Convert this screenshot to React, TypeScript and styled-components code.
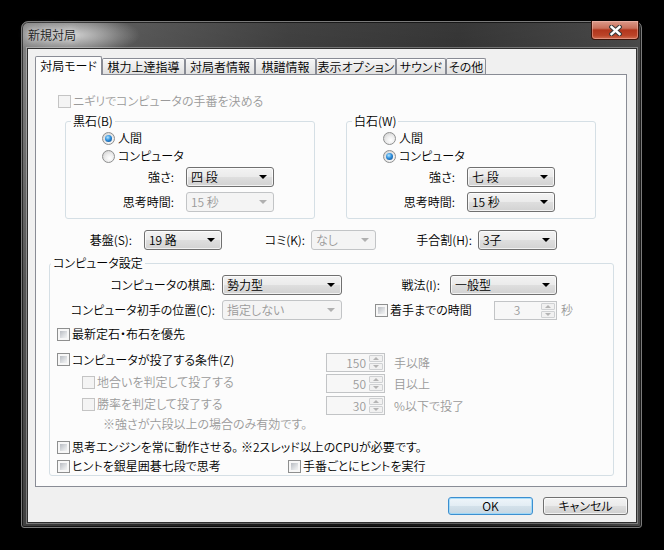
import React from "react";
import styled, { createGlobalStyle } from "styled-components";

const GlobalStyle = createGlobalStyle`
  html, body {
    margin: 0;
    padding: 0;
    background: #000;
  }
  body {
    font-family: "Noto Sans CJK JP", "Noto Sans", sans-serif;
    font-size: 12px;
    font-weight: 350;
    line-height: 14px;
    font-feature-settings: "palt";
    color: #000;
  }
`;

const PANEL_BG = "#fcfcfc";
const GRAY_TEXT = "#9a9a9a";

const Screen = styled.div`
  width: 664px;
  height: 550px;
  box-sizing: border-box;
  padding: 21px 0 0 21px;
  background: #000;
`;

const Window = styled.div`
  width: 621px;
  height: 507px;
  box-sizing: border-box;
  display: flex;
  flex-direction: column;
  padding: 0 4px 4px 5px;
  border: 1px solid #7b7b7b;
  border-radius: 7px 7px 3px 3px;
  background:
    radial-gradient(ellipse 66px 20px at 52px 13px, rgba(215, 215, 215, 0.9), rgba(215, 215, 215, 0) 100%),
    linear-gradient(180deg, rgba(255, 255, 255, 0.16) 0, rgba(255, 255, 255, 0) 260px),
    linear-gradient(100deg, #6e6e6e 0%, #3c3c3c 14%, #1e1e1e 38%, #121212 62%, #262626 86%, #4a4a4a 100%);
  box-shadow: inset 0 0 0 1px rgba(0, 0, 0, 0.6);
`;

const TitleBar = styled.div`
  height: 26px;
  display: flex;
  align-items: center;
  padding-left: 1px;
`;

const Title = styled.span`
  color: #1e1e1e;
  text-shadow: 0 0 6px #e6e6e6, 0 0 10px #d0d0d0;
`;

const CloseButton = styled.div`
  margin-left: auto;
  margin-right: -2px;
  align-self: flex-start;
  margin-top: -1px;
  width: 48px;
  height: 19px;
  box-sizing: border-box;
  border: 1px solid #3b1309;
  border-top: none;
  border-radius: 0 0 4px 4px;
  background: linear-gradient(180deg, #dc9a8a 0%, #c9705b 40%, #b2361d 50%, #bb4428 80%, #cf6c50 100%);
  box-shadow: inset 0 0 0 1px rgba(255, 210, 200, 0.4);
  display: flex;
  align-items: center;
  justify-content: center;
`;

const Client = styled.div`
  flex: 1;
  display: flex;
  flex-direction: column;
  background: #f0f0f0;
  border: 1px solid #2f2f2f;
  box-shadow: 0 0 0 1px rgba(255, 255, 255, 0.3);
  padding: 7px 0 0 7px;
`;

const TabStrip = styled.div`
  display: flex;
  align-items: flex-end;
  height: 18px;
`;

const Tab = styled.div<{ $w: number; $active?: boolean }>`
  width: ${(p) => p.$w}px;
  height: ${(p) => (p.$active ? 19 : 16)}px;
  margin-bottom: ${(p) => (p.$active ? -1 : 0)}px;
  box-sizing: border-box;
  border: 1px solid #898c95;
  border-bottom: none;
  border-radius: 2px 2px 0 0;
  background: ${(p) =>
    p.$active ? PANEL_BG : "linear-gradient(180deg, #f6f6f6 0%, #ececec 50%, #e0e0e0 100%)"};
  box-shadow: ${(p) => (p.$active ? "none" : "inset 0 1px 0 #fff")};
  position: relative;
  z-index: ${(p) => (p.$active ? 1 : 0)};
  display: flex;
  align-items: center;
  justify-content: center;
  white-space: nowrap;
  padding-top: ${(p) => (p.$active ? 0 : 1)}px;
`;

const Panel = styled.div`
  width: 592px;
  height: 413px;
  box-sizing: border-box;
  border: 1px solid #898c95;
  background: ${PANEL_BG};
  display: flex;
  flex-direction: column;
`;

const CheckRow = styled.div<{ $left?: number; $top?: number; $w?: number; $h?: number; $off?: boolean }>`
  display: flex;
  align-items: center;
  gap: 2px;
  height: ${(p) => p.$h ?? 14}px;
  margin-left: ${(p) => p.$left ?? 0}px;
  margin-top: ${(p) => p.$top ?? 0}px;
  width: ${(p) => (p.$w ? `${p.$w}px` : "auto")};
  flex-shrink: 0;
  color: ${(p) => (p.$off ? GRAY_TEXT : "#000")};
  white-space: nowrap;
`;

const Box = styled.span<{ $off?: boolean }>`
  width: 13px;
  height: 13px;
  box-sizing: border-box;
  flex-shrink: 0;
  border: 1px solid ${(p) => (p.$off ? "#c4c4c4" : "#8e8f8f")};
  padding: 2px;
  background: ${(p) =>
    p.$off
      ? "#f4f4f4"
      : "linear-gradient(135deg, #b8bcc2 0%, #e4e6e8 70%, #f3f3f3 100%) content-box, #f7f7f7"};
`;

const Group = styled.div<{ $w: number; $h: number; $left?: number; $top?: number }>`
  position: relative;
  width: ${(p) => p.$w}px;
  height: ${(p) => p.$h}px;
  box-sizing: border-box;
  margin-left: ${(p) => p.$left ?? 0}px;
  margin-top: ${(p) => p.$top ?? 0}px;
  border: 1px solid #d5dfe5;
  border-radius: 3px;
  display: flex;
  flex-direction: column;
  flex-shrink: 0;
`;

const Legend = styled.span<{ $left?: number }>`
  position: absolute;
  top: -8px;
  left: ${(p) => p.$left ?? 5}px;
  padding: 0 2px;
  background: ${PANEL_BG};
  white-space: nowrap;
`;

const PlayerRow = styled.div`
  display: flex;
  gap: 31px;
  margin-left: 29px;
  margin-top: 13px;
`;

const RadioRow = styled.div<{ $top?: number }>`
  display: flex;
  align-items: center;
  gap: 3px;
  height: 18px;
  padding-left: 36px;
  margin-top: ${(p) => p.$top ?? 0}px;
`;

const Radio = styled.span<{ $on?: boolean }>`
  width: 13px;
  height: 13px;
  box-sizing: border-box;
  border-radius: 50%;
  border: 1px solid #8e8f8f;
  background: radial-gradient(circle at 60% 65%, #ffffff 0%, #ececec 45%, #c9c9c9 100%);
  display: flex;
  align-items: center;
  justify-content: center;
  &::after {
    content: "";
    display: ${(p) => (p.$on ? "block" : "none")};
    width: 7px;
    height: 7px;
    border-radius: 50%;
    background: radial-gradient(circle at 40% 35%, #b5e6ff 0%, #2e8fdc 45%, #0d3f7c 100%);
  }
`;

const FieldRow = styled.div<{ $top?: number; $left?: number }>`
  display: flex;
  align-items: center;
  height: 20px;
  margin-top: ${(p) => p.$top ?? 0}px;
  margin-left: ${(p) => p.$left ?? 0}px;
  flex-shrink: 0;
`;

const FieldLabel = styled.span<{ $w: number; $gap: number; $off?: boolean }>`
  width: ${(p) => p.$w}px;
  margin-right: ${(p) => p.$gap}px;
  text-align: right;
  white-space: nowrap;
  flex-shrink: 0;
  color: ${(p) => (p.$off ? GRAY_TEXT : "#000")};
`;

const Combo = styled.div<{ $w: number; $off?: boolean }>`
  width: ${(p) => p.$w}px;
  height: 20px;
  box-sizing: border-box;
  flex-shrink: 0;
  display: flex;
  align-items: center;
  padding: 0 6px 0 4px;
  border: 1px solid ${(p) => (p.$off ? "#c2c4c6" : "#707070")};
  border-radius: 3px;
  background: ${(p) =>
    p.$off ? "#f4f4f4" : "linear-gradient(180deg, #f3f3f3 0%, #ebebeb 48%, #dedede 52%, #d2d2d2 100%)"};
  box-shadow: ${(p) => (p.$off ? "none" : "inset 0 0 0 1px rgba(255, 255, 255, 0.7)")};
  color: ${(p) => (p.$off ? GRAY_TEXT : "#000")};
  white-space: nowrap;
  &::after {
    content: "";
    margin-left: auto;
    border-left: 4px solid transparent;
    border-right: 4px solid transparent;
    border-top: 4px solid ${(p) => (p.$off ? "#b0b0b0" : "#000")};
  }
`;

const SettingsRow = styled.div<{ $top?: number; $h?: number; $left?: number }>`
  display: flex;
  align-items: flex-start;
  height: ${(p) => p.$h ?? 19}px;
  margin-top: ${(p) => p.$top ?? 0}px;
  margin-left: ${(p) => p.$left ?? 0}px;
  flex-shrink: 0;
`;

const Spin = styled.div<{ $w: number }>`
  width: ${(p) => p.$w}px;
  height: 19px;
  box-sizing: border-box;
  flex-shrink: 0;
  display: flex;
  border: 1px solid #c2c4c6;
  background: #f7f7f7;
  color: ${GRAY_TEXT};
  padding: 1px;
`;

const SpinValue = styled.span<{ $center?: boolean }>`
  flex: 1;
  display: flex;
  align-items: center;
  justify-content: ${(p) => (p.$center ? "center" : "flex-end")};
  padding-right: 3px;
`;

const SpinButtons = styled.span`
  width: 14px;
  display: flex;
  flex-direction: column;
  gap: 1px;
`;

const SpinArrow = styled.span<{ $up?: boolean }>`
  flex: 1;
  box-sizing: border-box;
  border: 1px solid #cfd1d3;
  border-radius: 1px;
  background: #f1f1f1;
  display: flex;
  align-items: center;
  justify-content: center;
  &::after {
    content: "";
    border-left: 3px solid transparent;
    border-right: 3px solid transparent;
    ${(p) => (p.$up ? "border-bottom: 3px solid #b4b4b4;" : "border-top: 3px solid #b4b4b4;")}
  }
`;

const Suffix = styled.span<{ $gap: number }>`
  margin-left: ${(p) => p.$gap}px;
  align-self: center;
  color: ${GRAY_TEXT};
  white-space: nowrap;
`;

const Note = styled.div`
  margin-left: 53px;
  margin-top: 2px;
  height: 14px;
  color: ${GRAY_TEXT};
  white-space: nowrap;
`;

const ButtonRow = styled.div`
  width: 593px;
  display: flex;
  justify-content: flex-end;
  gap: 10px;
  margin-top: 10px;
`;

const Button = styled.div<{ $default?: boolean }>`
  width: 85px;
  height: 18px;
  box-sizing: border-box;
  border: 1px solid ${(p) => (p.$default ? "#3c8fd0" : "#707070")};
  border-radius: 3px;
  background: ${(p) =>
    p.$default
      ? "linear-gradient(180deg, #eef5fa 0%, #e3edf4 48%, #d3e1ea 52%, #c6d6e2 100%)"
      : "linear-gradient(180deg, #f3f3f3 0%, #ebebeb 48%, #dddddd 52%, #cfcfcf 100%)"};
  box-shadow: inset 0 0 0 1px ${(p) => (p.$default ? "rgba(150, 215, 250, 0.8)" : "rgba(255, 255, 255, 0.7)")};
  display: flex;
  align-items: center;
  justify-content: center;
`;

const tabs = [
  { label: "対局モード", w: 67, active: true },
  { label: "棋力上達指導", w: 83 },
  { label: "対局者情報", w: 70 },
  { label: "棋譜情報", w: 61 },
  { label: "表示オプション", w: 80 },
  { label: "サウンド", w: 50 },
  { label: "その他", w: 40 },
];

const resignRows = [
  { label: "地合いを判定して投了する", value: "50", suffix: "目以上", top: 2 },
  { label: "勝率を判定して投了する", value: "30", suffix: "%以下で投了", top: 3 },
];

function SpinBox({ w, value, center }: { w: number; value: string; center?: boolean }) {
  return (
    <Spin $w={w}>
      <SpinValue $center={center}>{value}</SpinValue>
      <SpinButtons>
        <SpinArrow $up />
        <SpinArrow />
      </SpinButtons>
    </Spin>
  );
}

function PlayerGroup({ title, human, strength, time, timeOff }: {
  title: string;
  human: boolean;
  strength: string;
  time: string;
  timeOff?: boolean;
}) {
  return (
    <Group $w={250} $h={98}>
      <Legend>{title}</Legend>
      <RadioRow $top={7}>
        <Radio $on={human} />
        人間
      </RadioRow>
      <RadioRow>
        <Radio $on={!human} />
        コンピュータ
      </RadioRow>
      <FieldRow $top={2}>
        <FieldLabel $w={108} $gap={12}>強さ:</FieldLabel>
        <Combo $w={88}>{strength}</Combo>
      </FieldRow>
      <FieldRow $top={5}>
        <FieldLabel $w={108} $gap={12}>思考時間:</FieldLabel>
        <Combo $w={88} $off={timeOff}>{time}</Combo>
      </FieldRow>
    </Group>
  );
}

export default function App() {
  return (
    <>
      <GlobalStyle />
      <Screen>
        <Window>
          <TitleBar>
            <Title>新規対局</Title>
            <CloseButton>
              <svg width="13" height="11" viewBox="0 0 13 11">
                <path d="M2.5 2 L10.5 9 M10.5 2 L2.5 9" stroke="#3a3a3a" strokeWidth="4.6" strokeLinecap="square" />
                <path d="M2.5 2 L10.5 9 M10.5 2 L2.5 9" stroke="#fff" strokeWidth="2.4" strokeLinecap="square" />
              </svg>
            </CloseButton>
          </TitleBar>
          <Client>
            <TabStrip>
              {tabs.map((t) => (
                <Tab key={t.label} $w={t.w} $active={t.active}>
                  {t.label}
                </Tab>
              ))}
            </TabStrip>
            <Panel>
              <CheckRow $left={22} $top={19} $off>
                <Box $off />
                ニギリでコンピュータの手番を決める
              </CheckRow>

              <PlayerRow>
                <PlayerGroup title="黒石(B)" human strength="四 段" time="15 秒" timeOff />
                <PlayerGroup title="白石(W)" human={false} strength="七 段" time="15 秒" />
              </PlayerRow>

              <FieldRow $top={11}>
                <FieldLabel $w={96} $gap={12}>碁盤(S):</FieldLabel>
                <Combo $w={78}>19 路</Combo>
                <FieldLabel $w={83} $gap={6}>コミ(K):</FieldLabel>
                <Combo $w={65} $off>なし</Combo>
                <FieldLabel $w={96} $gap={6}>手合割(H):</FieldLabel>
                <Combo $w={79}>3子</Combo>
              </FieldRow>

              <Group $w={565} $h={213} $left={13} $top={13}>
                <Legend $left={1}>コンピュータ設定</Legend>
                <FieldRow $top={11}>
                  <FieldLabel $w={165} $gap={7}>コンピュータの棋風:</FieldLabel>
                  <Combo $w={120}>勢力型</Combo>
                  <FieldLabel $w={98} $gap={10}>戦法(I):</FieldLabel>
                  <Combo $w={107}>一般型</Combo>
                </FieldRow>
                <FieldRow $top={5}>
                  <FieldLabel $w={165} $gap={7}>コンピュータ初手の位置(C):</FieldLabel>
                  <Combo $w={120} $off>指定しない</Combo>
                  <CheckRow $left={33} $w={119}>
                    <Box />
                    着手までの時間
                  </CheckRow>
                  <SpinBox w={63} value="3" center />
                  <Suffix $gap={4}>秒</Suffix>
                </FieldRow>

                <CheckRow $left={7} $top={7}>
                  <Box />
                  最新定石・布石を優先
                </CheckRow>

                <SettingsRow $top={12} $left={7}>
                  <CheckRow $w={269} $h={13}>
                    <Box />
                    コンピュータが投了する条件(Z)
                  </CheckRow>
                  <SpinBox w={59} value="150" />
                  <Suffix $gap={9}>手以降</Suffix>
                </SettingsRow>
                {resignRows.map((r) => (
                  <SettingsRow key={r.label} $top={r.top} $left={32}>
                    <CheckRow $w={244} $off $top={1}>
                      <Box $off />
                      {r.label}
                    </CheckRow>
                    <SpinBox w={59} value={r.value} />
                    <Suffix $gap={9}>{r.suffix}</Suffix>
                  </SettingsRow>
                ))}
                <Note>※強さが六段以上の場合のみ有効です。</Note>

                <CheckRow $left={7} $top={9}>
                  <Box />
                  思考エンジンを常に動作させる。 ※2スレッド以上のCPUが必要です。
                </CheckRow>
                <SettingsRow $top={5} $left={7} $h={14}>
                  <CheckRow $w={231}>
                    <Box />
                    ヒントを銀星囲碁七段で思考
                  </CheckRow>
                  <CheckRow>
                    <Box />
                    手番ごとにヒントを実行
                  </CheckRow>
                </SettingsRow>
              </Group>
            </Panel>
            <ButtonRow>
              <Button $default>OK</Button>
              <Button>キャンセル</Button>
            </ButtonRow>
          </Client>
        </Window>
      </Screen>
    </>
  );
}
